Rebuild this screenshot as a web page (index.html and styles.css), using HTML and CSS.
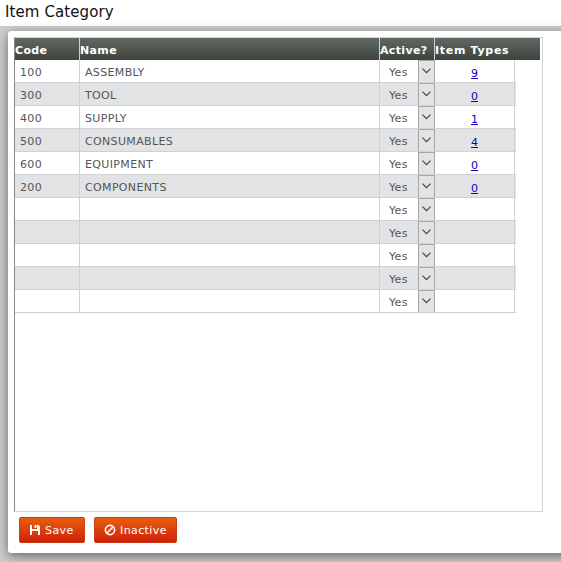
FILE: index.html
```
<!DOCTYPE html>
<html lang="en">
<head>
<meta charset="utf-8">
<title>Item Category</title>
<link rel="stylesheet" href="styles.css">
</head>
<body>
<h1 class="title"><span>Item Category</span></h1>
<main class="panel">
  <div class="grid">
    <div class="row head"><span>Code</span><span>Name</span><span>Active?</span><span class="wide">Item Types</span></div>
    <div id="rows"></div>
  </div>
  <div class="actions">
    <button class="btn save"><svg width="12" height="12" viewBox="0 0 12 12"><path fill="#fff" fill-rule="evenodd" d="M1 1h2v4h5V1h1.500L11 2.500V11H9V7H3v4H1zM5.500 1h2v3h-2z"/></svg><span>Save</span></button>
    <button class="btn inactive"><svg width="12" height="12" viewBox="0 0 12 12" fill="none" stroke="#fff" stroke-width="1.600"><circle cx="6" cy="6" r="4.600"/><path d="M2.800 9.200l6.400-6.400"/></svg><span>Inactive</span></button>
  </div>
</main>
<script src="script.js"></script>
</body>
</html>
```
FILE: styles.css
```
* { box-sizing: border-box; }
body {
  margin: 0;
  height: 562px;
  overflow: hidden;
  background: #cdced0;
  font: 11px/22px Verdana, "DejaVu Sans", sans-serif;
  letter-spacing: .35px;
  color: #555;
}
.title {
  margin: 0;
  height: 26px;
  padding-left: 5px;
  background: #fff;
  color: #111;
  font-size: 15px;
  font-weight: 400;
  line-height: 24px;
  letter-spacing: .1px;
}
.panel {
  margin: 5px 0 0 8px;
  width: 570px;
  height: 522px;
  padding: 6px;
  background: #fff;
  border-radius: 3px;
  box-shadow: 0 3px 12px #666;
}
.grid {
  width: 529px;
  height: 475px;
  border: 1px solid #d2d3d5;
  border-left-color: #85878a;
}
.row {
  display: grid;
  grid-template-columns: 65px 300px 55px 80px;
  width: 501px;
  height: 23px;
  border-bottom: 1px solid #d0d1d3;
}
.row > span {
  height: 22px;
  border-right: 1px solid #ced0d2;
  padding-left: 5px;
  white-space: nowrap;
  line-height: 25px;
}
.row:nth-child(even) { background: #e2e3e5; }
.row.head {
  width: 525px;
  height: 22px;
  border: 0;
  background: linear-gradient(#626962, #3c443d);
  color: #fff;
  font-weight: 700;
}
.row.head > span { padding-left: 0; }
.row.head > .wide { border-right: 0; letter-spacing: .7px; }
.row > .active { display: flex; justify-content: space-between; padding-left: 9px; border-right: 0; }
.drop {
  display: flex;
  align-items: center;
  justify-content: center;
  width: 17px;
  height: 22px;
  padding-bottom: 1px;
  background: #e3e3e3;
  border: solid #a5a6a8;
  border-width: 1px 1px 0;
}
.row > .types { text-align: center; padding: 2px 0 0; line-height: 24px; }
a { color: #1100cc; letter-spacing: 0; }
.actions { display: flex; gap: 9px; padding: 5px; }
.btn {
  display: flex;
  align-items: center;
  gap: 4px;
  height: 26px;
  padding: 2px 0 0 9px;
  border: 1px solid #c93a12;
  border-radius: 2px;
  background: linear-gradient(#e75f0d, #d0200d);
  color: #fff;
  font: inherit;
  letter-spacing: .4px;
}
.btn svg { margin-top: -2px; }
.save { width: 66px; }
.inactive { width: 83px; }
```
FILE: script.js
```
const items = [["100","ASSEMBLY","9"],["300","TOOL","0"],["400","SUPPLY","1"],["500","CONSUMABLES","4"],["600","EQUIPMENT","0"],["200","COMPONENTS","0"],["","",""],["","",""],["","",""],["","",""],["","",""]];
document.getElementById("rows").innerHTML = items.map(([code, name, count]) =>
  `<div class="row"><span>${code}</span><span><span class="name">${name}</span></span><span class="active"><span>Yes</span><i class="drop"><svg width="9" height="6" viewBox="0 0 9 6" fill="none" stroke="#444" stroke-width="1.2"><path d="M.5 .7l4 4 4-4"/></svg></i></span><span class="types">${count ? `<a href="#">${count}</a>` : ""}</span></div>`).join("");
```
